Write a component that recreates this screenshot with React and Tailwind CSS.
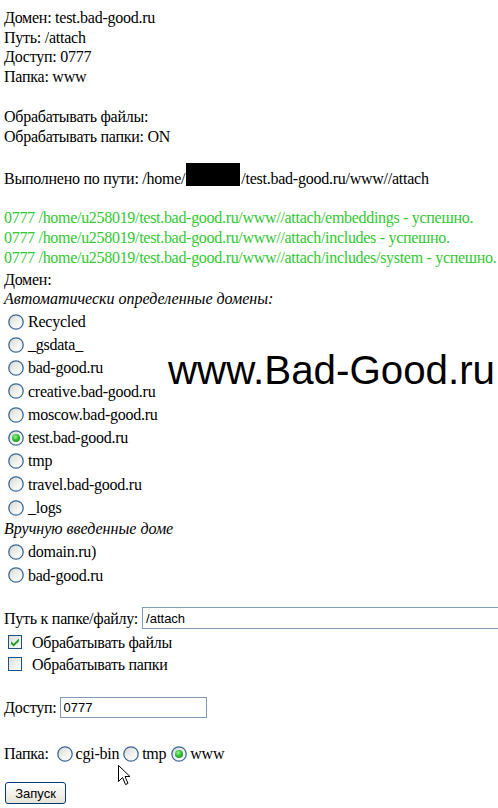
import React from "react";

function Radio({ checked, className = "" }) {
  return (
    <svg width="16" height="16" viewBox="0 0 16 16" className={"shrink-0 " + className}>
      <defs>
        <linearGradient id="rg" x1="0" y1="0" x2="1" y2="1">
          <stop offset="0" stopColor="#d6d6d0" />
          <stop offset="0.6" stopColor="#f4f4f2" />
          <stop offset="1" stopColor="#ffffff" />
        </linearGradient>
        <radialGradient id="dot" cx="0.4" cy="0.35" r="0.7">
          <stop offset="0" stopColor="#9ef09e" />
          <stop offset="0.5" stopColor="#3cc63c" />
          <stop offset="1" stopColor="#1c8f1c" />
        </radialGradient>
      </defs>
      <circle cx="8" cy="8" r="7.2" fill="url(#rg)" stroke="#3a6896" strokeWidth="1.3" />
      {checked && <circle cx="8" cy="8" r="4" fill="url(#dot)" />}
    </svg>
  );
}

function Checkbox({ checked }) {
  return (
    <svg width="14" height="14" viewBox="0 0 14 14" className="shrink-0">
      <defs>
        <linearGradient id="cg" x1="0" y1="0" x2="1" y2="1">
          <stop offset="0" stopColor="#dcdcd7" />
          <stop offset="1" stopColor="#ffffff" />
        </linearGradient>
      </defs>
      <rect x="0.5" y="0.5" width="13" height="13" fill="url(#cg)" stroke="#1c5180" />
      {checked && (
        <path d="M3 6.2 L5.6 8.8 L11 3.4 L11 6.2 L5.6 11.6 L3 9 Z" fill="#21a121" />
      )}
    </svg>
  );
}

function RadioRow({ label, checked }) {
  return (
    <div className="flex h-[23.25px] items-center">
      <Radio checked={checked} className="ml-[4px] mr-[4px]" />
      <span>{label}</span>
    </div>
  );
}

export default function App() {
  const auto = [
    "Recycled",
    "_gsdata_",
    "bad-good.ru",
    "creative.bad-good.ru",
    "moscow.bad-good.ru",
    "test.bad-good.ru",
    "tmp",
    "travel.bad-good.ru",
    "_logs",
  ];
  return (
    <div className="relative h-[808px] w-[498px] overflow-hidden bg-white pl-1 pt-2 font-['Liberation_Serif','Times_New_Roman',serif] text-[16px] leading-[19.5px] tracking-[-0.25px] text-black">
      <div>Домен: test.bad-good.ru</div>
      <div>Путь: /attach</div>
      <div>Доступ: 0777</div>
      <div>Папка: www</div>

      <div className="mt-[21px]">Обрабатывать файлы:</div>
      <div>Обрабатывать папки: ON</div>

      <div className="mt-[23px] whitespace-nowrap">
        Выполнено по пути: /home/
        <span className="ml-[1px] mr-[1px] inline-block h-[23px] w-[54px] -mt-[6px] -mb-[2px] bg-black align-baseline" />
        /test.bad-good.ru/www//attach
      </div>

      <div className="mt-[19px] whitespace-nowrap leading-[20px] tracking-[-0.3px] text-[#32c832]">
        <div>0777 /home/u258019/test.bad-good.ru/www//attach/embeddings - успешно.</div>
        <div>0777 /home/u258019/test.bad-good.ru/www//attach/includes - успешно.</div>
        <div>0777 /home/u258019/test.bad-good.ru/www//attach/includes/system - успешно.</div>
      </div>

      <div className="mt-[2px] leading-[19px]">Домен:</div>
      <div className="leading-[19px] tracking-normal italic">Автоматически определенные домены:</div>

      <div className="mt-[2.4px]">
        {auto.map((d) => (
          <RadioRow key={d} label={d} checked={d === "test.bad-good.ru"} />
        ))}
      </div>

      <div className="leading-[19px] tracking-normal italic">Вручную введенные доме</div>
      <div className="mt-[2.4px]">
        <RadioRow label="domain.ru)" />
        <RadioRow label="bad-good.ru" />
      </div>

      <div className="mt-[20.4px] flex h-[22px] items-center whitespace-nowrap">
        <span>Путь к папке/файлу:</span>
        <div className="ml-[4px] flex h-[22px] w-[400px] shrink-0 items-center border border-[#7f9db9] bg-white px-[3px] font-['Liberation_Sans',Arial,sans-serif] text-[13px] tracking-normal">
          /attach
        </div>
      </div>

      <div className="mt-[2px]">
        <div className="flex h-[22px] items-center">
          <span className="ml-[4px] mr-[10px] flex">
            <Checkbox checked />
          </span>
          <span>Обрабатывать файлы</span>
        </div>
        <div className="flex h-[22px] items-center">
          <span className="ml-[4px] mr-[10px] flex">
            <Checkbox />
          </span>
          <span>Обрабатывать папки</span>
        </div>
      </div>

      <div className="mt-[22px] flex h-[21px] items-center">
        <span>Доступ:</span>
        <div className="ml-[4px] flex h-[21px] w-[147px] items-center border border-[#7f9db9] bg-white px-[2px] font-['Liberation_Sans',Arial,sans-serif] text-[13px] tracking-normal">
          0777
        </div>
      </div>

      <div className="mt-[24px] flex h-[23px] items-center">
        <span>Папка:</span>
        <Radio className="ml-[8px] mr-[3px]" />
        <span>cgi-bin</span>
        <Radio className="ml-[4px] mr-[3px]" />
        <span>tmp</span>
        <Radio checked className="ml-[5px] mr-[3px]" />
        <span>www</span>
      </div>

      <div className="mt-[17px] flex">
        <button className="ml-[1px] flex h-[22px] w-[61px] items-center justify-center rounded-[3px] border border-[#003c74] bg-gradient-to-b from-white to-[#e6e4d8] font-['Liberation_Sans',Arial,sans-serif] text-[13px] leading-none tracking-normal text-black">
          Запуск
        </button>
      </div>

      <div className="absolute left-[168px] top-[351px] whitespace-nowrap font-['Liberation_Sans',Arial,sans-serif] text-[40.3px] leading-[40px] tracking-normal text-black">
        www.Bad-Good.ru
      </div>

      <svg
        className="absolute left-[118px] top-[765px]"
        width="14"
        height="21"
        viewBox="0 0 14 21"
      >
        <path
          d="M0.5 0.5 L0.5 16.5 L4.5 12.5 L7.5 19.5 L10 18.5 L7 11.5 L12 11.5 Z"
          fill="white"
          stroke="black"
          strokeWidth="1"
          strokeLinejoin="miter"
        />
      </svg>
    </div>
  );
}
